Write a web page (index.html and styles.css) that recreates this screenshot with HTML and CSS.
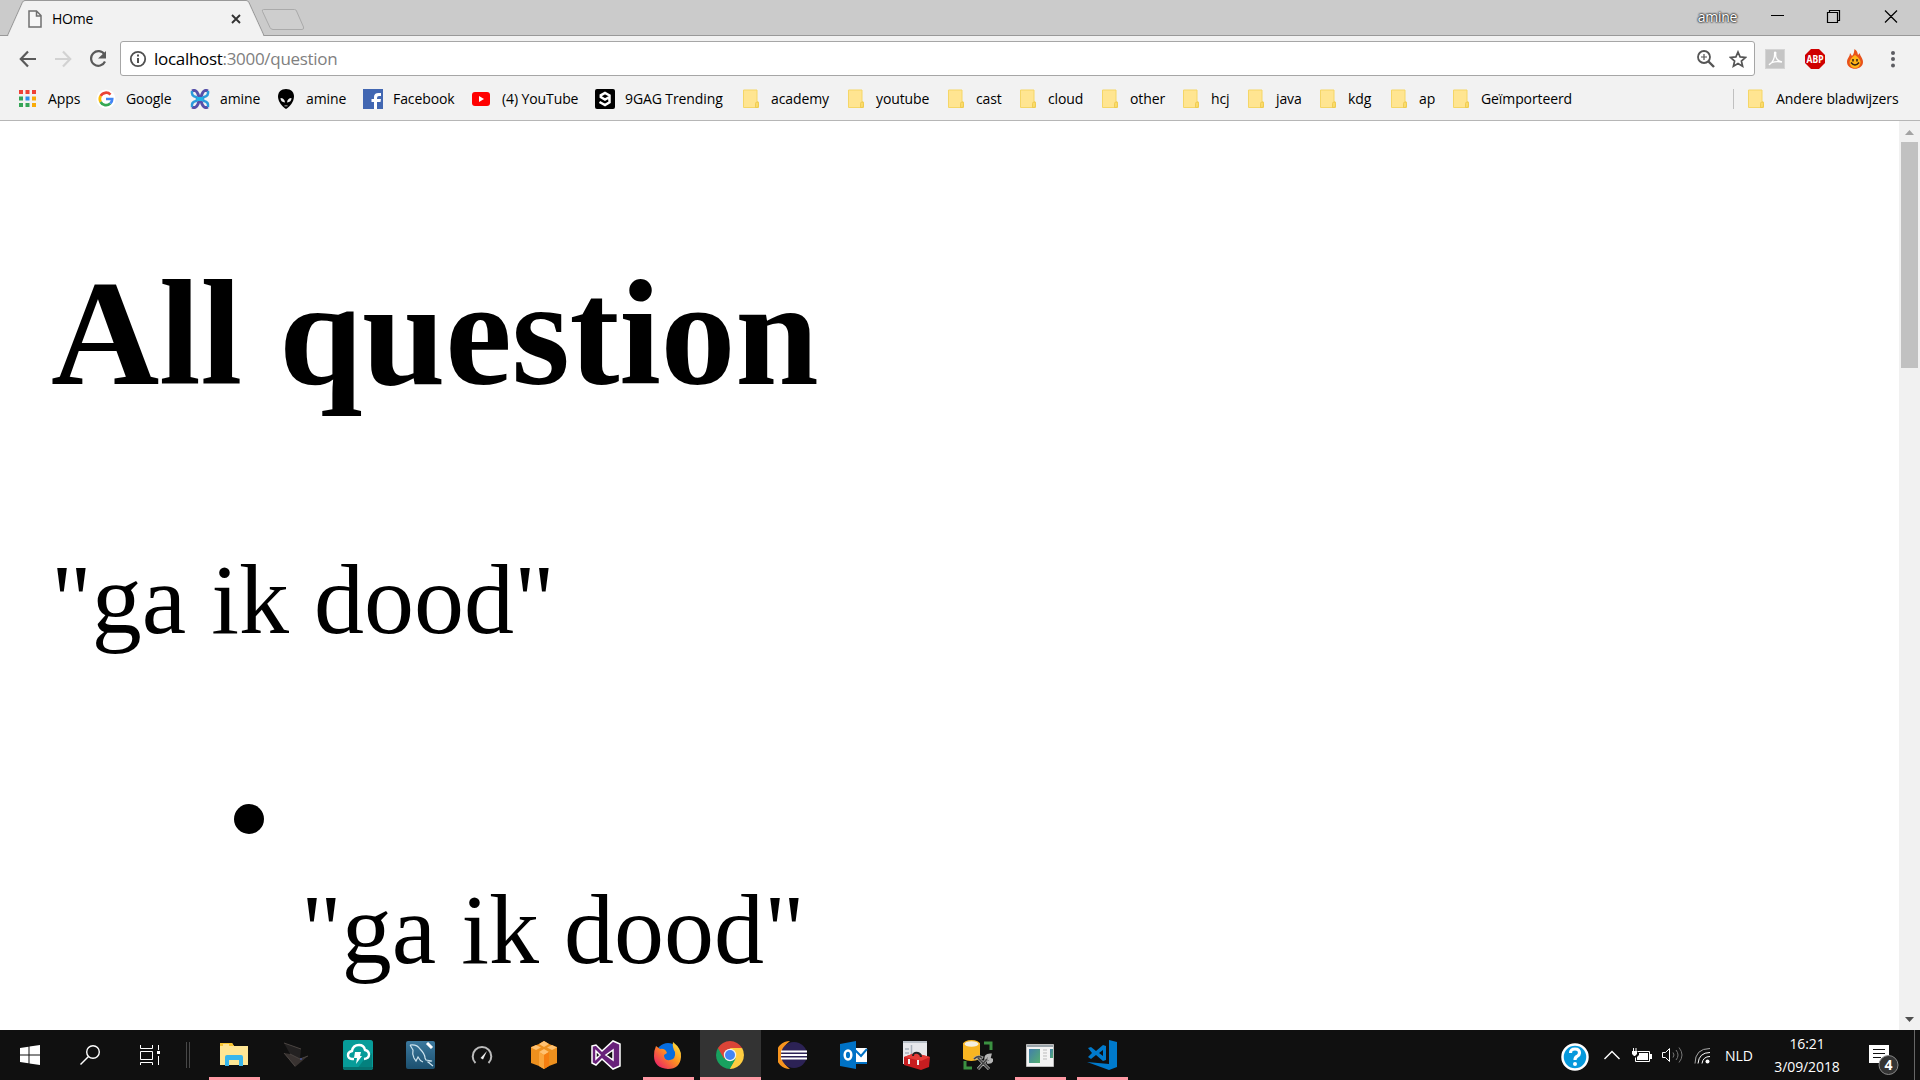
FILE: index.html
```html
<!DOCTYPE html>
<html lang="nl">
<head>
<meta charset="utf-8">
<title>HOme</title>
<link rel="stylesheet" href="styles.css">
</head>
<body>
<svg width="0" height="0" class="defs">
  <symbol id="folder" viewBox="0 0 16 20"><path d="M1 1h13v11.500l1.500.5v5.500h-15V1z" fill="#ffe591" stroke="#f5d667"/><path d="M12.500 18.500v-4q0-1.500 1.500-1.500t1.500 1.500v2.500q0 1.500-1.500 1.500z" fill="#fbdc69" stroke="#ebc64d" stroke-width=".8"/></symbol>
</svg>
<div class="screen">
  <header class="tabstrip">
    <svg class="tabshape" width="320" height="36"><path d="M0 35.500H7.500L22.500 2Q23.500.5 25 .5H246Q248 .5 249 2.500L264 35.500H320" fill="none" stroke="#999"/><path d="M8 36L23 2.500Q24 1 25.500 1H246Q247.500 1 248.500 3L263.500 36z" fill="#f2f2f2"/><path d="M263.500 9.500h31q1.500 0 2 1.500l7 16q.6 2.500-1.500 2.500h-29q-2 0-3-2l-7.500-16q-.8-2 1-2z" fill="#cecece" stroke="#aaa"/></svg>
    <svg class="page-icon" width="14" height="18" viewBox="0 0 14 18"><path d="M1 1h7.500L13 5.500V17H1zM8.500 1v5H13" fill="#f7f7f7" stroke="#707070" stroke-width="1.500"/></svg>
    <span class="tab-title">HOme</span>
    <svg class="tab-close" width="10" height="10" viewBox="0 0 10 10"><path d="M1 1l8 8M9 1l-8 8" stroke="#333" stroke-width="1.900"/></svg>
    <span class="user">amine</span>
    <svg class="window-controls" width="130" height="20" viewBox="0 0 130 20"><g fill="none" stroke="#000" stroke-width="1.200"><path d="M1 8.500h13M57.500 5.500h10v10h-10zM59.500 5.500v-2h10v10h-2M115 3.500l12 12M127 3.500l-12 12"/></g></svg>
  </header>
  <nav class="toolbar">
    <svg width="106" height="36" viewBox="0 0 106 36" class="navicons"><g fill="none" stroke-width="2.200"><path d="M36 18H21M28 10.500L20.800 18l7.200 7.500" stroke="#5a5a5a"/><path d="M55 18h15M63 10.500l7.200 7.500-7.200 7.500" stroke="#d2d2d2"/><path d="M104.500 13.500A7.300 7.300 0 1 0 105 20.500" stroke="#5a5a5a"/></g><path d="M106 10v7.500h-8z" fill="#5a5a5a"/></svg>
    <div class="omnibox">
      <svg width="18" height="18" viewBox="0 0 18 18"><circle cx="9" cy="9" r="7.200" fill="none" stroke="#505050" stroke-width="1.800"/><path d="M9 8v5M9 4.500v2" stroke="#505050" stroke-width="2"/></svg>
      <span class="url">localhost<span class="path">:3000/question</span></span>
      <svg class="zoomicon" width="18" height="18" viewBox="0 0 18 18"><g fill="none" stroke="#555"><circle cx="7" cy="7" r="6" stroke-width="1.800"/><path d="M11 11l6 6" stroke-width="2.400"/><path d="M7 4v6M4 7h6" stroke-width="1.200"/></g></svg>
      <svg width="18" height="18" viewBox="0 0 18 18"><path d="M9 2l2.100 4.900 5.400.5-4.100 3.600 1.200 5.200L9 13.400l-4.600 2.800 1.200-5.200-4.100-3.600 5.400-.5z" fill="none" stroke="#555" stroke-width="1.700"/></svg>
    </div>
    <div class="extensions">
      <svg width="20" height="20" viewBox="0 0 20 20"><path d="M0 0h20v20H0z" fill="#d4d4d4"/><path d="M1 1h18v18H1z" fill="#c5c5c5"/><path d="M4 16c4-2 6-8 5.500-12 0-1 1.500-1 1.300 0C10 9 13 12 17 13M4 16c2-3 7-4 13-3" fill="none" stroke="#fff" stroke-width="1.300"/></svg>
      <svg width="20" height="20" viewBox="0 0 20 20"><path d="M6 0h8l6 6v8l-6 6H6l-6-6V6z" fill="#cf0000"/><text x="10" y="13.500" text-anchor="middle" textLength="17" lengthAdjust="spacingAndGlyphs" class="abp">ABP</text></svg>
      <svg width="16" height="20" viewBox="0 0 16 20"><path d="M7.500 0c3 2 3 4 3.500 6l2-2c-.5 3 3 5 3 9 0 9-16 9-16 0C0 9 3 8 3 4l2 3C7 5 7 3 7.500 0z" fill="#e8521a"/><path d="M8 6q6 4 5.500 8-1 5-5.500 5t-5.500-5Q3 9 8 6z" fill="#ffb316"/><path d="M6 10v2.500M10 10v2.500M4 13.500q4 5 8 0" fill="none" stroke="#332015" stroke-width="1.500"/></svg>
      <svg width="4" height="18" viewBox="0 0 4 18"><g fill="#5d5d62"><circle cx="2" cy="3" r="2"/><circle cx="2" cy="9" r="2"/><circle cx="2" cy="15.500" r="2"/></g></svg>
    </div>
  </nav>
  <nav class="bookmarks">
    <a class="bm"><svg width="17" height="18" viewBox="0 0 17 18"><path d="M0 0h4v4H0zM6.500 0h4v4h-4zM13 0h4v4h-4z" fill="#ee4135"/><path d="M0 6.500h4v4H0zM0 13h4v4H0z" fill="#35a557"/><path d="M6.500 6.500h4v4h-4z" fill="#2d8eea"/><path d="M6.500 13h4v4h-4z" fill="#36a557"/><path d="M13 6.500h4v4h-4zM13 13h4v4h-4z" fill="#f9ab08"/></svg><span>Apps</span></a>
    <a class="bm near"><svg width="20" height="20" viewBox="0 0 20 20"><circle cx="10" cy="10" r="9.500" fill="#fff"/><g fill="none" stroke-width="2.700"><path d="M14.500 5.600A6.200 6.200 0 0 0 4.600 7" stroke="#ea4335"/><path d="M4.600 7a6.200 6.200 0 0 0 0 6" stroke="#fbbc05"/><path d="M4.600 13a6.200 6.200 0 0 0 9.600 1.600" stroke="#34a853"/><path d="M14.200 14.600a6 6 0 0 0 2-4.600H10" stroke="#4285f4"/></g></svg><span>Google</span></a>
    <a class="bm near"><svg width="20" height="20" viewBox="0 0 20 20"><g fill="none" stroke-width="3"><path d="M2 2q4-2 6 3l1 3h2l1-3q2-5 6-3M2 18q4 2 6-3l1-3h2l1 3q2 5 6 3" stroke="#5650a9"/><path d="M2 2q-1 5 4 6l2 2-2 2q-5 1-4 6M18 2q1 5-4 6l-2 2 2 2q5 1 4 6" stroke="#2a9bdc" stroke-width="2.500"/></g><path d="M7 8h6v4H7z" fill="#20b3e8"/></svg><span>amine</span></a>
    <a class="bm"><svg width="16" height="20" viewBox="0 0 16 20"><path d="M8 0c5 0 8 3 8 7.500 0 5-4 10-8 12.500C4 17.500 0 12.500 0 7.500 0 3 3 0 8 0z"/><path d="M2.500 9q4 0 4.500 4.500Q2.500 13 2.500 9zM13.500 9Q9.500 9 9 13.500q4.500-.5 4.500-4.500zM6.500 16.500h3v.8h-3z" fill="#eee"/></svg><span>amine</span></a>
    <a class="bm near"><svg width="20" height="20" viewBox="0 0 20 20"><path d="M0 0h20v20H0z" fill="#4267b2"/><path d="M11 20v-7H8.500v-3H11V8q0-4 4.500-4H18v3h-2q-2 0-2 2v1h4l-.5 3H14v7z" fill="#fff"/></svg><span>Facebook</span></a>
    <a class="bm"><svg width="18" height="14" viewBox="0 0 18 14"><rect width="18" height="14" rx="3" fill="#f00"/><path d="M7 4l5 3-5 3z" fill="#fff"/></svg><span>(4) YouTube</span></a>
    <a class="bm near"><svg width="20" height="20" viewBox="0 0 20 20"><rect width="20" height="20" rx="2"/><path d="M13.500 8.500L10 10.500 5.800 8V6.300L10 4l4.500 2.400v7L10 16l-5.500-3" fill="none" stroke="#fff" stroke-width="2.500"/></svg><span>9GAG Trending</span></a>
    <a class="bm"><svg width="16" height="20"><use href="#folder"/></svg><span>academy</span></a>
    <a class="bm"><svg width="16" height="20"><use href="#folder"/></svg><span>youtube</span></a>
    <a class="bm"><svg width="16" height="20"><use href="#folder"/></svg><span>cast</span></a>
    <a class="bm"><svg width="16" height="20"><use href="#folder"/></svg><span>cloud</span></a>
    <a class="bm"><svg width="16" height="20"><use href="#folder"/></svg><span>other</span></a>
    <a class="bm"><svg width="16" height="20"><use href="#folder"/></svg><span>hcj</span></a>
    <a class="bm"><svg width="16" height="20"><use href="#folder"/></svg><span>java</span></a>
    <a class="bm"><svg width="16" height="20"><use href="#folder"/></svg><span>kdg</span></a>
    <a class="bm"><svg width="16" height="20"><use href="#folder"/></svg><span>ap</span></a>
    <a class="bm"><svg width="16" height="20"><use href="#folder"/></svg><span>Geïmporteerd</span></a>
    <i class="divider"></i>
    <a class="bm"><svg width="16" height="20"><use href="#folder"/></svg><span>Andere bladwijzers</span></a>
  </nav>
  <div class="viewport">
    <main>
      <h2>All question</h2>
      <p>"ga ik dood"</p>
      <ul><li><i class="bullet"></i><p>"ga ik dood"</p></li></ul>
    </main>
    <div class="scrollbar">
      <svg width="9" height="5"><path d="M0 5L4.500 0 9 5z" fill="#a3a3a3"/></svg>
      <div class="thumb"></div>
      <svg class="down" width="9" height="5"><path d="M0 0h9L4.500 5z" fill="#505050"/></svg>
    </div>
  </div>
  <footer class="taskbar">
    <div class="apps">
      <div><svg width="20" height="20" viewBox="0 0 20 20"><path d="M0 3l8.500-1.200v7.700H0zM9.500 1.600L20 0v9.500H9.500zM0 10.500h8.500v7.700L0 17zM9.500 10.500H20V20L9.500 18.400z" fill="#fff"/></svg></div>
      <div><svg width="20" height="20" viewBox="0 0 20 20"><g fill="none" stroke="#fff" stroke-width="1.400"><circle cx="13" cy="7" r="6.300"/><path d="M8.500 11.500L.5 19.500"/></g></svg></div>
      <div><svg width="20" height="20" viewBox="0 0 20 20"><g fill="none" stroke="#fff"><path d="M.5 0v3.500h12V0M.5 6.500h12v8H.5zM.5 20v-2.500h12V20M18.500 0v5M18.500 11v9"/></g><path d="M17 6h3v3h-3z" fill="#fff"/></svg></div>
      <div class="sep"></div>
      <div class="run"><svg width="28" height="24" viewBox="0 0 28 24"><path d="M0 2q0-2 2-2h10l2 3h14v19H0z" fill="#ffe694"/><path d="M0 0h12l2 3H0z" fill="#f9c52e"/><path d="M3 1.500h6v1H3z" fill="#fff"/><path d="M5 23V14q0-2 2-2h14q2 0 2 2v9h-4v-6H9v6z" fill="#38b6ed"/></svg></div>
      <div><svg width="26" height="26" viewBox="0 0 26 26"><path d="M1 1l17 6-1 10L7 12z" fill="#232121"/><path d="M1 11l6 1 10 5 8-3-13 11z" fill="#393331"/><path d="M1 1l17 6M7 12l10 5 8-3M1 11l11 13" fill="none" stroke="#4b4542"/><circle cx="18" cy="17" r="1" fill="#455090"/></svg></div>
      <div><svg width="30" height="30" viewBox="0 0 30 30"><rect width="30" height="30" rx="2.500" fill="#079c99"/><path d="M20 21l9-8v16H14z" fill="#04817e"/><path d="M0 27h30q0 3-3 3H3q-3 0-3-3z" fill="#06716f"/><path d="M11 19H9q-4 0-4-4 0-3 4-4 1-6 7-6 5 0 6 5 4 1 4 4.500 0 4-5 4.500" fill="none" stroke="#fff" stroke-width="2.400"/><path d="M12 12h6l-1 4h2l-6 8 1-6h-3z" fill="#fff"/></svg></div>
      <div><svg width="29" height="28" viewBox="0 0 29 28"><defs><linearGradient id="my" x2="0" y2="1"><stop stop-color="#3b789d"/><stop offset="1" stop-color="#1c506f"/></linearGradient></defs><rect width="29" height="28" rx="2" fill="url(#my)"/><path d="M4 4q7-1 10 4 5 5 5 9l1 2 6 1-4 1 5 4M4 4l3 5q-1 4 1 8l2 3 2-4q2 4 5 5" fill="none" stroke="#cde3ee" stroke-width="1.200"/><path d="M21 2l5 5" stroke="#fff" stroke-width="3"/></svg></div>
      <div><svg width="22" height="20" viewBox="0 0 22 20"><path d="M4.500 18A9.300 9.300 0 1 1 17.500 18" fill="none" stroke="#bbb" stroke-width="2"/><path d="M9.500 13L16 6l-4 8.500z" fill="#eee"/></svg></div>
      <div><svg width="26" height="28" viewBox="0 0 26 28"><path d="M0 6l8-3 5-3 5 3 8 3v16l-8 3-5 3-5-3-8-3z" fill="#ed901e"/><path d="M8 3l5-3 5 3-5 3zM0 6.500l5-2.500 5 2.500L5 9zM16 6.500L21 4l5 2.500L21 9zM8 11l5-3 5 3-5 3z" fill="#ffc171"/><path d="M8 11l5 3v14l-5-3z" fill="#faa53b"/><path d="M13 14l5-3v14l-5 3z" fill="#f57e10"/></svg></div>
      <div><svg width="30" height="30" viewBox="0 0 30 30"><path fill-rule="evenodd" d="M1 6l4-1 6 6L22 1l7 3v22l-7 3-11-10-6 6-4-2zM5 11v8l4-4zM22 10l-7 5 7 5z" fill="#68217a" stroke="#fff" stroke-width="1.500"/></svg></div>
      <div class="run"><svg width="28" height="28" viewBox="0 0 28 28"><defs><linearGradient id="fx" x1="1" x2="0" y2="1"><stop stop-color="#fff044"/><stop offset=".45" stop-color="#ff9220"/><stop offset="1" stop-color="#e80975"/></linearGradient></defs><circle cx="14" cy="14" r="12" fill="#066de0"/><path d="M2 5l4 3q5-1 7 4l-3 2q0 6 6 5 6-1 5-8-3-5-2-10 9 7 8 15-1 12-13 12Q0 27 0 15q0-6 2-10z" fill="url(#fx)"/></svg></div>
      <div class="run active"><svg width="28" height="28" viewBox="0 0 28 28"><path d="M14 14L1.900 7A14 14 0 0 1 26.100 7z" fill="#db4437"/><path d="M14 14L14 28A14 14 0 0 1 1.900 7z" fill="#18a15f"/><path d="M14 14l12.100-7A14 14 0 0 1 14 28z" fill="#ffcd40"/><path d="M14 7h12.100l-6 10.500z" fill="#ffcd40"/><path d="M1.900 7l6 10.500L14 14V7z" fill="#db4437"/><path d="M7.900 17.500L14 28l6-10.500z" fill="#18a15f"/><path d="M14 28l6-10.500 4-3 2 6z" fill="#ffcd40"/><circle cx="14" cy="14" r="6.200" fill="#f1f1f1"/><circle cx="14" cy="14" r="5" fill="#4285f4"/></svg></div>
      <div><svg width="29" height="28" viewBox="0 0 29 28"><path d="M12 0a14 14 0 0 0 0 28 17 17 0 0 1 0-28z" fill="#f7941e"/><circle cx="16" cy="14" r="13" fill="#2c2255"/><path d="M3 10.500h26M3 14h26M3 17.500h26" stroke="#fff" stroke-width="1.800"/></svg></div>
      <div><svg width="28" height="28" viewBox="0 0 28 28"><path d="M15 7h12v15H15z" fill="#fff"/><path d="M15 9l6 6 6-7M15 22h12" fill="none" stroke="#0072c6" stroke-width="2"/><path d="M0 3l16-3v28L0 25z" fill="#0072c6"/><ellipse cx="8" cy="14" rx="3.300" ry="4.500" fill="none" stroke="#fff" stroke-width="2.500"/></svg></div>
      <div><svg width="28" height="29" viewBox="0 0 28 29"><path d="M1 0h24v23H1z" fill="#e7e8eb"/><path d="M1 1h24M3 8h4M3 12h4M9.500 4v12" fill="none" stroke="#aab2bd" stroke-width="1.500"/><path d="M2 16l11-4 15 4-1 10-8 3L2 24z" fill="#c71d20"/><path d="M2 16l11-4 15 4-9 4z" fill="#e53c37"/><path d="M11 15q0-4 5-3 3 1 3 4" fill="none" stroke="#242424" stroke-width="2"/><path d="M7 18v5M16 19v5" stroke="#eee" stroke-width="2"/></svg></div>
      <div><svg width="30" height="30" viewBox="0 0 30 30"><path d="M0 3h17v16q-9 4-17 0z" fill="#f8b522"/><ellipse cx="8.500" cy="4" rx="8.500" ry="4" fill="#f8b522"/><ellipse cx="8.500" cy="4" rx="7" ry="2.800" fill="#f4efe0"/><path d="M21 3h7v7M2 21v7h7" fill="none" stroke="#3b9141" stroke-width="3"/><path d="M11 19q4-4 9-1M15 18l11 11M15 29l8-9q-1-5 4-5l-1 4 3 1q-1 3-5 2" fill="none" stroke="#b5b5b5" stroke-width="3"/><path d="M11 19q4-4 8-1M15 18l11 11M15 29l9-10" fill="none" stroke="#444" stroke-width="1.700"/></svg></div>
      <div class="run"><svg width="28" height="23" viewBox="0 0 28 23"><path d="M.5.5h27v22H.5z" fill="#f4f4f4" stroke="#bdbdbd"/><path d="M1 2h26" stroke="#9aa4aa" stroke-width="2"/><defs><linearGradient id="wn" x2="1" y2="1"><stop stop-color="#427eac"/><stop offset="1" stop-color="#55af70"/></linearGradient></defs><path d="M3 5h11v14H3z" fill="url(#wn)"/><path d="M17 6h4M17 9h4M17 12h4M17 15h4" stroke="#bbb"/><path d="M24 5h3v9h-3z" fill="url(#wn)"/></svg></div>
      <div class="run"><svg width="30" height="30" viewBox="0 0 30 30"><path d="M22 0l8 2v25l-8 3L0 22l22 2z" fill="#007acc"/><path fill-rule="evenodd" d="M1 8l3-1 5 4 7-6 3 1v14l-3 1-7-6-5 4-3-2 4-4zM16 10l-4 3 4 3z" fill="#007acc"/></svg></div>
    </div>
    <div class="tray">
      <svg class="help" width="28" height="28" viewBox="0 0 28 28"><circle cx="14" cy="14" r="12.500" fill="#0699dc" stroke="#fff" stroke-width="2.500"/><path d="M9.500 10q0-4 4.500-4t4.500 4q0 2-2.500 3.500-2 1-2 3.500" fill="none" stroke="#fff" stroke-width="3.200"/><circle cx="14" cy="21" r="2" fill="#fff"/></svg>
      <svg class="chev" width="16" height="10" viewBox="0 0 16 10"><path d="M.5 9L8 1.500 15.500 9" fill="none" stroke="#fff" stroke-width="1.400"/></svg>
      <svg class="battery" width="20" height="15" viewBox="0 0 20 15"><path d="M5.500 3.500h12v10h-14v-4" fill="none" stroke="#fff"/><path d="M7 5h9v7H5v-3l2-2zM18 6h2v5h-2zM0 3h5v3L3 8H2L0 6zM1 0h1v3H1zM3.500 0h1v3h-1z" fill="#fff"/></svg>
      <svg class="volume" width="21" height="18" viewBox="0 0 21 18"><path d="M.5 6.500h3l4-4v13l-4-4h-3z" fill="none" stroke="#fff"/><path d="M11 6.500q2 2.500 0 5M14 4q4 5 0 10M17 1.500q6 7.500 0 15" fill="none" stroke="#777"/></svg>
      <svg class="wifi" width="17" height="17" viewBox="0 0 17 17"><g fill="none" stroke="#fff"><path d="M1 16.500Q1 1.500 16 1.500" stroke="#aaa"/><path d="M4 16.500Q5 5.500 16 5.500M8 16.500Q9 9.500 16 9.500"/></g><circle cx="13.500" cy="14.500" r="2" fill="#fff"/></svg>
      <span class="lang">NLD</span>
      <div class="clock"><span>16:21</span><span>3/09/2018</span></div>
      <svg class="notif" width="32" height="32" viewBox="0 0 32 32"><path d="M0 0h20v16h-9v2H0z" fill="#fff"/><path d="M4 4.500h12M4 8.500h12M4 12.500h8" stroke="#111"/><circle cx="19.500" cy="20" r="9.500" fill="#343434" stroke="#888"/><text x="19.500" y="25" text-anchor="middle" class="count">4</text></svg>
      <i class="peek"></i>
    </div>
  </footer>
</div>
</body>
</html>
```
FILE: styles.css
```css
* { box-sizing: border-box; }
body { margin: 0; background: #fff; overflow: hidden; font-family: "Open Sans", "Noto Sans", sans-serif; color: #000; }
svg { display: block; flex: none; }
.defs { position: absolute; }
.screen { width: 1920px; height: 1080px; display: flex; flex-direction: column; }

.tabstrip { position: relative; height: 36px; flex: none; display: flex; align-items: center; background: #cbcbcb; border-bottom: 1px solid #999; padding: 0 20px 0 28px; }
.tabshape { position: absolute; left: 0; top: 0; }
.page-icon, .tab-title, .tab-close { position: relative; }
.page-icon { margin-top: 2px; }
.tab-title { width: 179px; margin-left: 10px; margin-top: 1px; font-size: 14px; letter-spacing: -0.2px; }
.tab-close { margin-top: 3px; }
.user { margin-left: auto; margin-top: -3px; margin-right: 33px; font-size: 14px; letter-spacing: -0.3px; color: #fff; text-shadow: 0 0 2px #222, 0 0 2px #222, 0 0 2px #333; }
.window-controls { margin-top: -1px; }

.toolbar { height: 45px; flex: none; display: flex; align-items: center; background: #f2f2f2; }
.navicons { margin-right: 14px; }
.omnibox { width: 1635px; height: 35px; display: flex; align-items: center; background: #fff; border: 1px solid #a6a6a6; border-radius: 3px; padding: 0 7px 0 8px; }
.url { font-size: 17px; letter-spacing: -0.3px; margin-left: 7px; }
.path { color: #808080; }
.zoomicon { margin-left: auto; margin-right: 14px; }
.extensions { flex: 1; height: 20px; display: grid; grid-template-columns: 40px 42px 44px 4px; padding-left: 10px; align-items: center; }
.abp { font: bold 10px "Noto Sans", sans-serif; fill: #fff; }

.bookmarks { height: 40px; flex: none; display: grid; grid-template-columns: 77px 94px 88px 85px 109px 123px 148px 105px 100px 72px 82px 81px 65px 72px 71px 62px 280px 15px 160px; align-items: center; background: #f2f2f2; border-bottom: 1px solid #b6b6b6; padding: 0 0 3px 19px; }
.bm { display: flex; align-items: center; font-size: 14px; letter-spacing: -0.1px; white-space: nowrap; }
.bm svg { margin-right: 12px; }
.near svg { margin-right: 10px; }
.bm span { margin-top: -1px; }
.divider { width: 1px; height: 20px; background: #c0c0c0; }

.viewport { height: 909px; flex: none; display: flex; background: #fff; }
main { flex: 1; overflow: hidden; padding: 126px 0 0 51px; font-family: "Liberation Serif", serif; font-size: 100px; line-height: 115px; }
main h2 { margin: 0; font-size: 150px; line-height: 172px; letter-spacing: -0.3px; }
main p { margin: 0; }
main h2 + p { margin-top: 123px; }
main ul { margin: 126px 0 0; padding: 0 0 0 249px; list-style: none; }
main li { display: flex; align-items: flex-start; margin-left: -66px; }
.bullet { width: 30px; height: 30px; margin-top: 21px; border-radius: 50%; background: #000; }
main li p { margin: 89px 0 0 37px; }
.scrollbar { width: 21px; display: flex; flex-direction: column; align-items: center; background: #f1f1f1; padding: 9px 0 8px; }
.thumb { width: 17px; height: 226px; margin-top: 7px; background: #c1c1c1; }
.down { margin-top: auto; }

.taskbar { height: 50px; flex: none; display: flex; justify-content: space-between; background: #101010; color: #fff; }
.apps { display: grid; grid-template-columns: 60px 60px 60px 23px repeat(15, 62px); }
.apps > div { position: relative; display: flex; align-items: center; justify-content: center; }
.apps .sep { width: 4px; height: 26px; margin: 12px 0 0 6px; border: solid #484848; border-width: 0 1px; }
.run::after { content: ""; position: absolute; left: 6px; bottom: 0; width: 51px; height: 3px; background: #ff99a4; }
.apps .active { width: 61px; margin-left: 1px; padding-right: 2px; background: #333; }
.active::after { left: 0; width: 61px; }
.tray { width: 359px; display: flex; align-items: center; }
.help { margin-top: 4px; }
.chev { margin-left: 15px; }
.battery { margin-left: 12px; }
.volume { margin-left: 10px; }
.wifi { margin-left: 11px; margin-top: 1px; }
.lang { margin-left: 14px; width: 28px; font-size: 14px; }
.clock { width: 82px; margin-left: 13px; display: flex; flex-direction: column; align-items: center; font-size: 14px; line-height: 23px; letter-spacing: -0.1px; white-space: nowrap; }
.notif { margin-left: 21px; margin-top: 12px; }
.count { font: bold 14px "Noto Sans", sans-serif; fill: #fff; }
.peek { width: 1px; height: 50px; margin-left: auto; margin-right: 5px; background: #666; }
```
